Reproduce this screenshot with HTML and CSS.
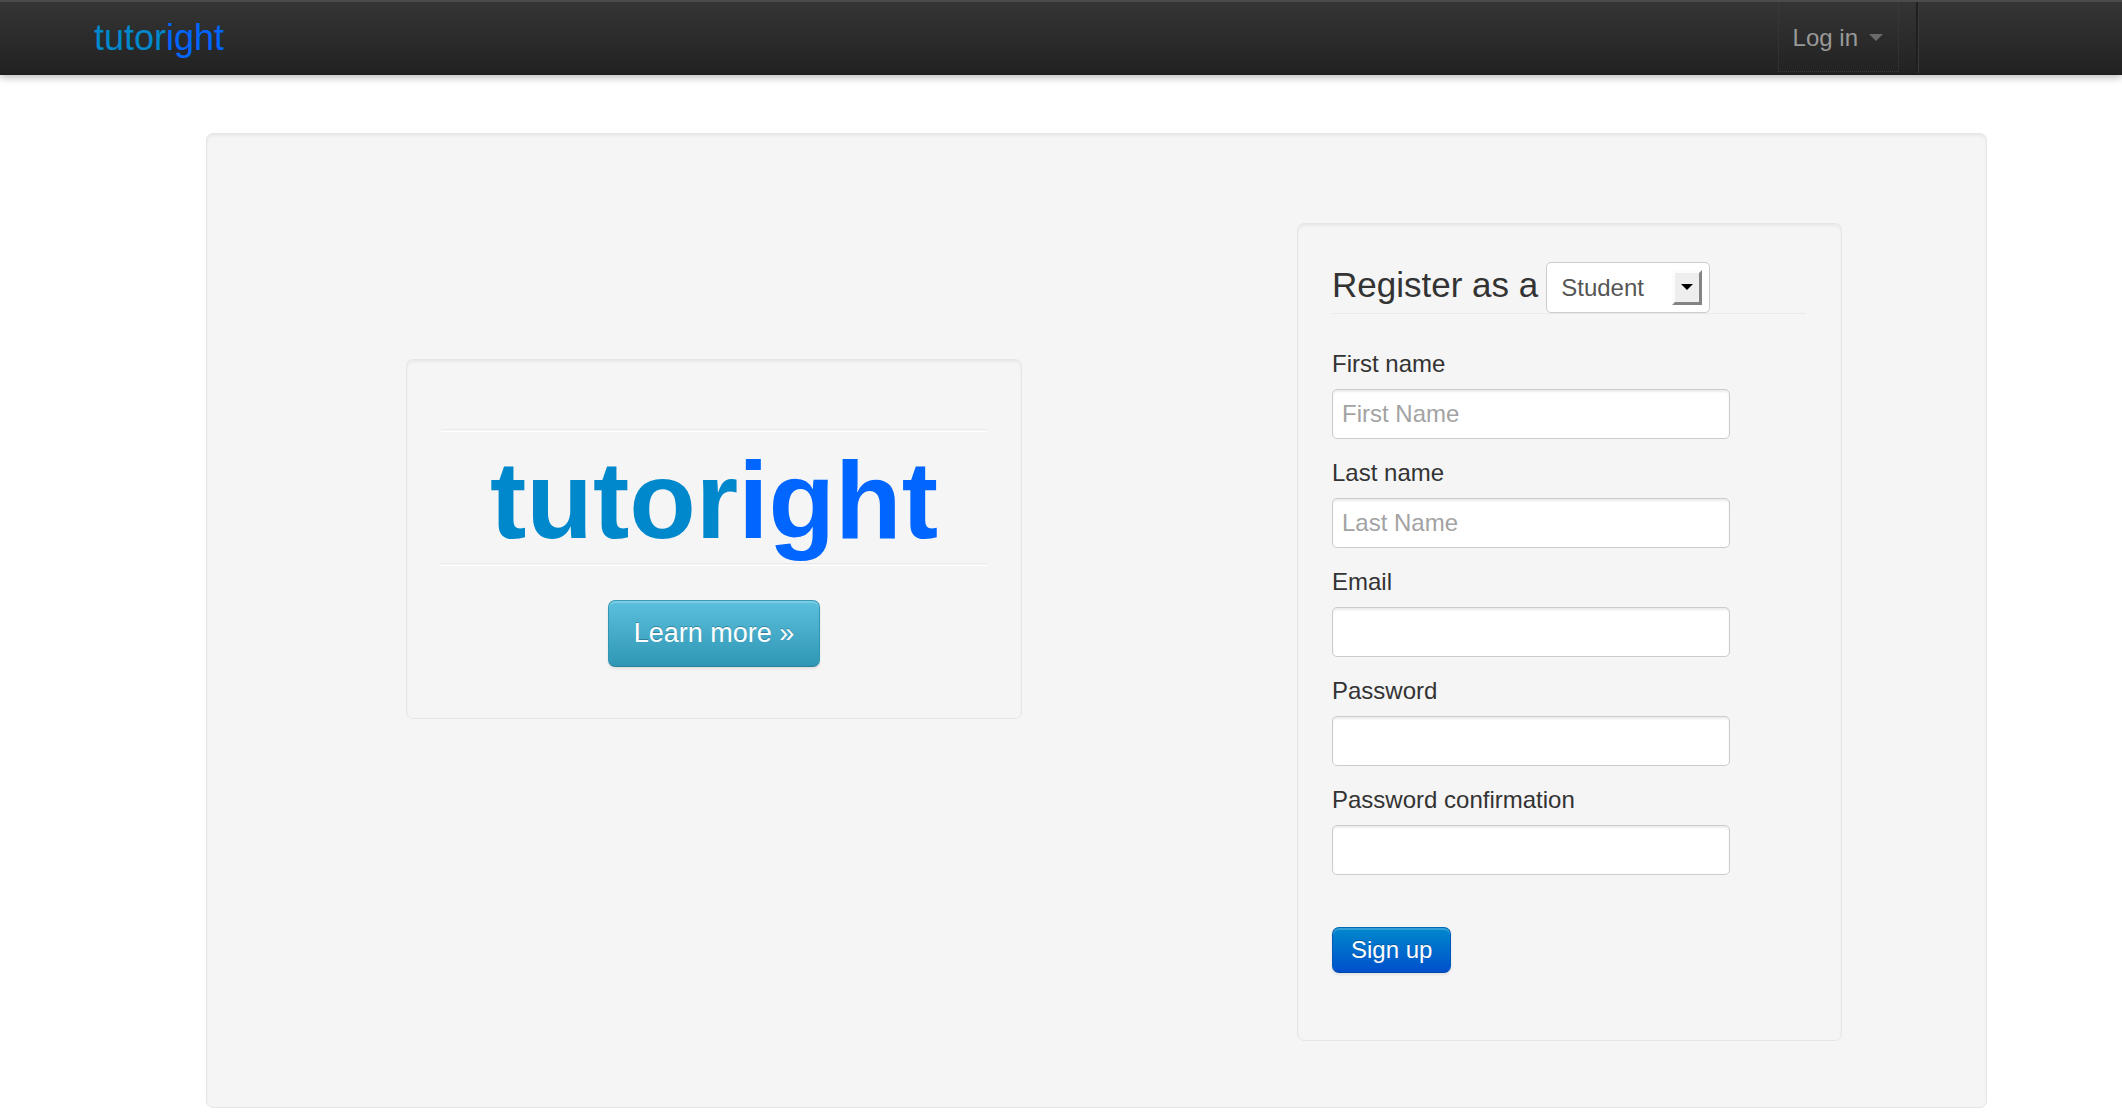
FILE: index.html
```html
<!DOCTYPE html>
<html lang="en">
<head>
<meta charset="utf-8">
<title>tutoright</title>
<link rel="stylesheet" href="styles.css">
</head>
<body>
<header class="navbar">
  <a class="brand" href="#"><span class="brand-a">tutor</span><span class="brand-b">ight</span></a>
  <nav class="nav">
    <a class="nav-link" href="#">Log in <span class="caret"></span></a>
  </nav>
</header>
<main class="well page">
  <section class="well hero">
    <hr class="rule">
    <h1 class="hero-title"><span class="brand-a">tutor</span><span class="brand-b">ight</span></h1>
    <hr class="rule">
    <a class="btn btn-info" href="#">Learn more »</a>
  </section>
  <form class="well register">
    <div class="legend">
      <label class="legend-text" for="role">Register as a</label>
      <span class="picker">
        <select class="select" id="role"><option>Student</option><option>Tutor</option></select>
        <svg class="picker-arrow" width="30" height="35" viewBox="0 0 30 35" aria-hidden="true">
          <path fill="#fcfcfc" d="M0 0h30L0 35z"/>
          <path fill="#848484" d="M30 0v35H0l3-3 24-29z"/>
          <path fill="#eee" d="M3 3h24v29H3z"/>
          <path fill="#000" d="M9 14h12l-6 6z"/>
        </svg>
      </span>
    </div>
    <div class="field"><label for="first">First name</label><input class="input" id="first" type="text" placeholder="First Name"></div>
    <div class="field"><label for="last">Last name</label><input class="input" id="last" type="text" placeholder="Last Name"></div>
    <div class="field"><label for="email">Email</label><input class="input" id="email" type="email"></div>
    <div class="field"><label for="pass">Password</label><input class="input" id="pass" type="password"></div>
    <div class="field"><label for="confirm">Password confirmation</label><input class="input" id="confirm" type="password"></div>
    <button class="btn btn-primary" type="submit">Sign up</button>
  </form>
</main>
</body>
</html>
```
FILE: styles.css
```css
* { box-sizing: border-box; }

body {
  margin: 0;
  background: #fff;
  color: #333;
  font: 24px/34px "Liberation Sans", Arial, sans-serif;
}

a { text-decoration: none; }

.navbar {
  display: flex;
  justify-content: space-between;
  height: 75px;
  padding: 0 203px 0 94px;
  border-bottom: 2px solid #1f1f1f;
  background: linear-gradient(#353535, #222);
  box-shadow: inset 0 2px 0 #4b4b4b, 0 2px 8px rgba(0, 0, 0, .3);
}

.brand {
  font-size: 36px;
  line-height: 75px;
}

.brand-a { color: #08c; }
.brand-b { color: #06f; }

.nav {
  display: flex;
  margin-top: 2px;
  padding-right: 19px;
  border-right: 1px solid #3a3a3a;
  box-shadow: inset -2px 0 0 #1f1f1f;
}

.nav-link {
  display: flex;
  align-items: center;
  gap: 11px;
  height: 70px;
  padding: 2px 15px 0 14px;
  border: 1px dotted #3c3c3c;
  border-top: 0;
  color: #999;
}

.caret {
  border: 7px solid transparent;
  border-top-color: #6b6b6b;
  border-bottom: 0;
}

.well {
  border: 1px solid #e6e6e6;
  border-radius: 7px;
  background: #f5f5f5;
  box-shadow: inset 0 2px 3px rgba(0, 0, 0, .05);
}

.page {
  display: grid;
  grid-template-columns: 616fr 545fr;
  column-gap: 275px;
  align-items: start;
  margin: 58px 135px 9px 206px;
  padding: 89px 144px 66px 199px;
}

.hero {
  margin-top: 136px;
  padding: 69px 34px 51px;
  text-align: center;
}

.rule {
  height: 3px;
  margin: 0;
  border: 0;
  border-top: 1px solid #eaeaea;
  border-bottom: 1px solid #fff;
}

.hero-title {
  margin: 0;
  padding-top: 5px;
  font-size: 109px;
  line-height: 126px;
}

.btn {
  display: inline-block;
  border: 1px solid;
  border-radius: 7px;
  color: #fff;
  font-family: inherit;
  text-shadow: 0 -1px 0 rgba(0, 0, 0, .25);
  box-shadow: inset 0 2px 0 rgba(255, 255, 255, .2), 0 2px 3px rgba(0, 0, 0, .08);
}

.btn-info {
  margin-top: 34px;
  padding: 0 25px;
  border-color: #3a9cb8 #2f96b4 #28809a;
  background: linear-gradient(#5bc0de, #2f96b4);
  font-size: 27px;
  line-height: 65px;
}

.btn-primary {
  margin-top: 35px;
  padding: 0 18px;
  border-color: #0069b3 #0058b8 #0048a8;
  background: linear-gradient(#08c, #0050cc);
  font-size: 24px;
  line-height: 44px;
}

.register { padding: 38px 35px 67px 34px; }

.legend {
  display: flex;
  gap: 8px;
  margin-bottom: 33px;
  border-bottom: 1px solid #eaeaea;
}

.legend-text {
  font-size: 35px;
  line-height: 45px;
}

.picker { position: relative; }

.select {
  display: block;
  width: 164px;
  height: 51px;
  padding: 0 14px;
  border: 1px solid #ccc;
  border-radius: 5px;
  appearance: none;
  background: #fff;
  color: #555;
  font: inherit;
}

.picker-arrow {
  position: absolute;
  top: 8px;
  right: 8px;
  pointer-events: none;
}

.field {
  display: flex;
  flex-direction: column;
  gap: 8px;
  margin-bottom: 17px;
}

.input {
  width: 84%;
  height: 50px;
  padding: 0 9px;
  border: 1px solid #ccc;
  border-radius: 5px;
  background: #fff;
  box-shadow: inset 0 2px 2px rgba(0, 0, 0, .075);
  color: #555;
  font: inherit;
}

.input::placeholder { color: #a3a3a3; }
```
